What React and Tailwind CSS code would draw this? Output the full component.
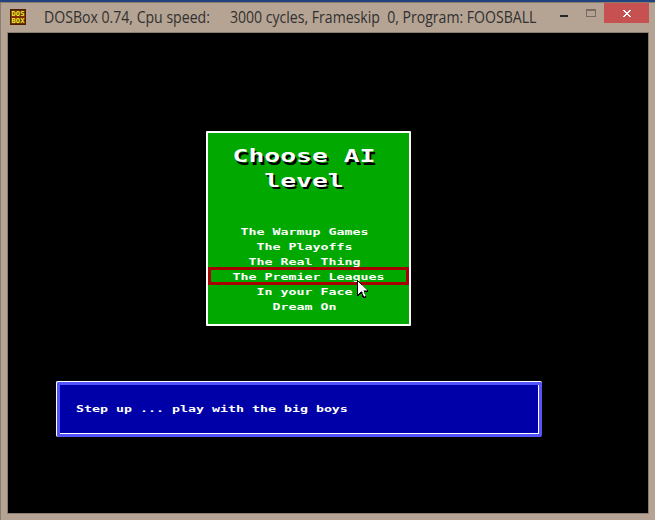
const levels = [
  'The Warmup Games',
  'The Playoffs',
  'The Real Thing',
  'The Premier Leagues',
  'In your Face',
  'Dream On',
];

const pixelFont = "font-['DejaVu_Sans_Mono','Liberation_Mono',monospace] font-bold whitespace-pre";

function SmallText({ children, className = '' }) {
  return (
    <span className={`${pixelFont} block text-[13.29px] leading-[15px] scale-y-[0.72] ${className}`}>
      {children}
    </span>
  );
}

function DosIcon() {
  return (
    <svg className="ml-[9px] mt-[6px] shrink-0" width="16" height="16" viewBox="0 0 16 16">
      <rect width="16" height="16" fill="#4c1d02" />
      <rect x="1" y="1" width="14" height="14" fill="#6a3005" />
      <rect x="1" y="7" width="14" height="2" fill="#852f08" />
      <g fill="#f4ee2c" fontFamily="'DejaVu Sans Mono', monospace" fontWeight="bold" fontSize="6.8">
        <text x="1.5" y="6.8" textLength="13" lengthAdjust="spacingAndGlyphs">DOS</text>
        <text x="1.5" y="14" textLength="13" lengthAdjust="spacingAndGlyphs">BOX</text>
      </g>
    </svg>
  );
}

function Titlebar() {
  return (
    <header className="flex h-[29px] shrink-0 items-start">
      <DosIcon />
      <h1 className="ml-[18px] mt-[3px] w-[500px] origin-left scale-x-[0.88] whitespace-pre font-['Open_Sans','Noto_Sans',sans-serif] text-[16px] leading-[22px] text-[#303030]">
        {'DOSBox 0.74, Cpu speed:'}
        <span className="ml-[2px]">{'     3000 cycles, Frameskip  0, Program: FOOSBALL'}</span>
      </h1>
      <div className="ml-auto mr-[6px] flex items-start">
        <span className="mt-3 h-[2px] w-2 bg-[#292725]" />
        <span className="ml-[18px] mt-[6px] h-[8px] w-[10px] border border-t-2 border-[#786a61]" />
        <span className="ml-2 flex h-5 w-[45px] items-center justify-center bg-[#c75050]">
          <svg width="8" height="7" viewBox="0 0 8 7" shapeRendering="crispEdges">
            <path
              d="M0 0h2v1h1v1h2v-1h1v-1h2v1h-1v1h-1v1h-1v1h1v1h1v1h1v1h-2v-1h-1v-1h-2v1h-1v1h-2v-1h1v-1h1v-1h1v-1h-1v-1h-1v-1h-1z"
              fill="#fff"
            />
          </svg>
        </span>
      </div>
    </header>
  );
}

function Cursor() {
  return (
    <svg className="absolute left-[149px] top-[147px]" width="12" height="19" viewBox="0 0 12 19" shapeRendering="crispEdges">
      <path d="M0 0v16h1l3-3 2 5h3v-2l-2-4h4v-1z" fill="#000" />
      <path d="M1 2v12l3-3h1l2 5h1v-1l-2-5h4z" fill="#fff" stroke="#fff" strokeWidth="0.5" />
    </svg>
  );
}

function Menu() {
  return (
    <section className="relative ml-[198px] mt-[98px] flex h-[195px] w-[205px] flex-col rounded-[1px] border-2 border-white bg-[#00a800] text-white">
      <h2
        className={`${pixelFont} mt-[3px] h-[50px] origin-center scale-y-[0.7] pr-[9px] text-center text-[26.4px] leading-[35px] [text-shadow:2px_3px_0_#000]`}
      >
        {'Choose AI\nlevel'}
      </h2>
      <ul className="mt-[38px] flex flex-col text-center">
        {levels.map((level, i) => (
          <li
            key={level}
            className={
              i === 3
                ? '-mb-[1px] -mt-[2px] flex h-[18px] items-center justify-center border-[3px] border-[#a80000]'
                : 'flex h-[15px] items-center justify-center'
            }
          >
            <SmallText className={i === 3 ? '' : 'pr-[8px]'}>{level}</SmallText>
          </li>
        ))}
      </ul>
      <Cursor />
    </section>
  );
}

function Hint() {
  return (
    <section className="ml-12 mt-[55px] h-[56px] w-[486px] rounded-[2px] border-l border-t border-white bg-[#5454fc] pb-[3px] pl-[3px] pr-[3px] pt-[3px]">
      <div className="flex h-[49px] w-[479px] items-center border-b border-r border-white bg-[#0000a8] pb-[2px] pl-[16px] text-white">
        <SmallText>Step up ... play with the big boys</SmallText>
      </div>
    </section>
  );
}

export default function App() {
  return (
    <div className="flex h-[520px] w-[655px] flex-col overflow-hidden border-t-2 border-[#20427e] bg-[#b5a393]">
      <div className="flex flex-1 flex-col border-l border-t border-l-[#8b7c70] border-t-[#8b7c70]">
        <Titlebar />
        <main className="ml-[6px] flex h-[482px] w-[642px] flex-col items-start border border-[#8b7c70] bg-black">
          <Menu />
          <Hint />
        </main>
      </div>
    </div>
  );
}
